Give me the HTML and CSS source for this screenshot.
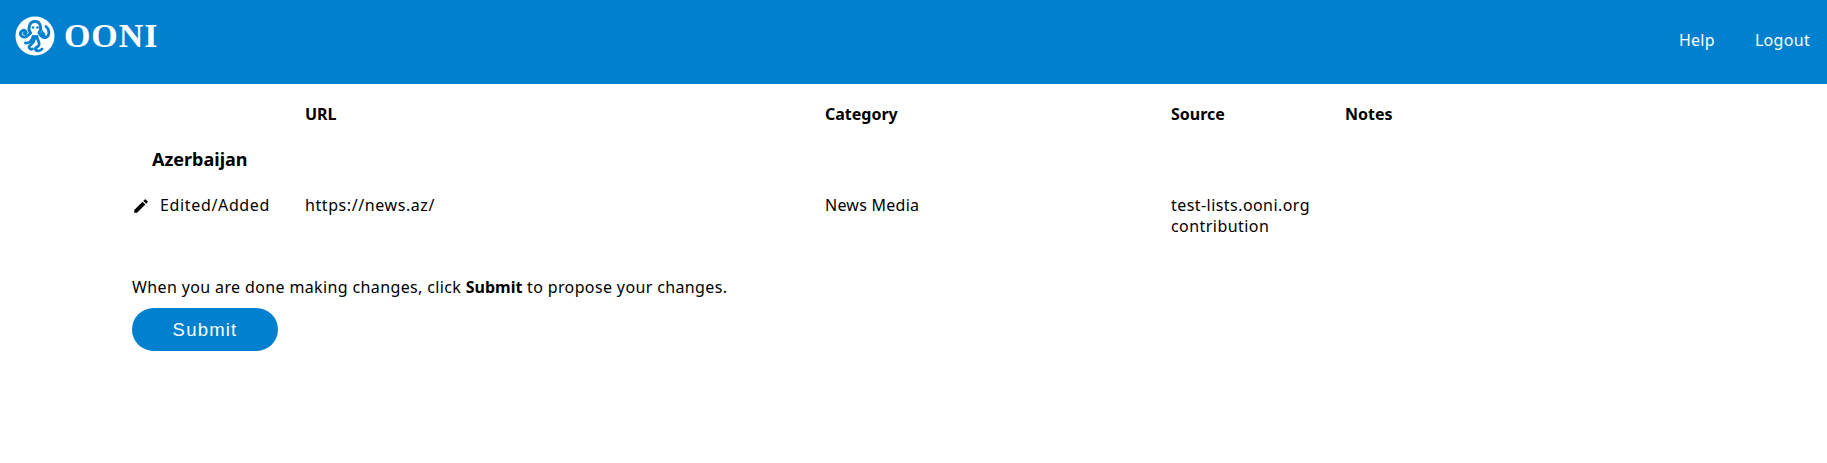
FILE: index.html
```html
<!DOCTYPE html>
<html lang="en">
<head>
<meta charset="utf-8">
<title>OONI Test Lists</title>
<link rel="stylesheet" href="styles.css">
</head>
<body>
<header class="topbar">
  <a class="brand" href="#">
    <svg class="brand-mark" viewBox="0 0 40 40" aria-hidden="true">
      <circle cx="20" cy="20" r="19.500" fill="#fff"/>
      <g fill="none" stroke="#0280d0" stroke-width="2.800" stroke-linecap="round" stroke-linejoin="round">
        <path d="M15.500 17C12.500 13.500 14 5.500 20 5.500S27 13 24 17"/>
        <path d="M15.500 17C13 20.500 8.500 23 6 19.500C4 16 8.500 12.500 11 15.500C12 17 10 18.500 9 17.500"/>
        <path d="M24 17C26 21.500 30.500 23 33 20C35 17 33.500 12.500 31 10.500"/>
        <path d="M18 20.500C17.500 24.500 14 27.500 10.500 27"/>
        <path d="M20 20.500C20 25 17.500 27.500 15 29.500C13 31 15 34 17.500 33"/>
        <path d="M22 20.500C22.500 25 25 26 24 29C23 32 19.500 31 20.500 33.500C21.500 35.500 25 35.500 27 33"/>
      </g>
      <circle cx="18" cy="11.500" r="1.300" fill="#0280d0"/>
      <circle cx="22.500" cy="11.500" r="1.300" fill="#0280d0"/>
      <path d="M27 13C28 16 30.500 17 30.500 19.200A2.400 2.400 0 0 1 25.700 19.200C25.700 17 27 15.500 27 13Z" fill="#0280d0"/>
    </svg>
    <span class="brand-name">OONI</span>
  </a>
  <nav class="topnav">
    <a href="#">Help</a>
    <a href="#">Logout</a>
  </nav>
</header>
<main class="content">
  <table class="changes">
    <colgroup>
      <col class="col-status"><col class="col-url"><col class="col-category"><col class="col-source"><col class="col-notes">
    </colgroup>
    <thead>
      <tr><th></th><th>URL</th><th>Category</th><th>Source</th><th>Notes</th></tr>
    </thead>
    <tbody>
      <tr class="country-row"><td colspan="5">Azerbaijan</td></tr>
      <tr class="entry-row">
        <td>
          <div class="status">
            <svg class="pencil" viewBox="0 0 24 24" aria-hidden="true"><path d="M3 17.250V21h3.750L17.810 9.940l-3.750-3.750L3 17.250zM20.710 7.040a1 1 0 0 0 0-1.410l-2.340-2.340a1 1 0 0 0-1.410 0l-1.830 1.830 3.750 3.750 1.830-1.830z"/></svg>
            <span>Edited/Added</span>
          </div>
        </td>
        <td class="cell-url">https://news.az/</td>
        <td class="cell-category">News Media</td>
        <td class="cell-source">test-lists.ooni.org contribution</td>
        <td></td>
      </tr>
    </tbody>
  </table>
  <p class="hint">When you are done making changes, click <strong>Submit</strong> to propose your changes.</p>
  <button class="submit" type="button">Submit</button>
</main>
</body>
</html>
```
FILE: styles.css
```css
* { box-sizing: border-box; }
html, body { margin: 0; padding: 0; background: #fff; }
body {
  font-family: "Noto Sans", "Open Sans", sans-serif;
  font-size: 16px;
  color: #000;
}
a { color: inherit; text-decoration: none; }

.topbar {
  height: 84px;
  background: #0280d0;
  color: #fff;
  display: flex;
  align-items: center;
  justify-content: space-between;
  padding: 0 17px 0 15px;
}
.brand { display: flex; align-items: center; gap: 9px; margin-top: -13px; }
.brand-mark { width: 40px; height: 40px; display: block; }
.brand-name {
  font-family: "Liberation Serif", serif;
  font-weight: 700;
  font-size: 34px;
  letter-spacing: 0.9px;
  line-height: 40px;
}
.topnav { display: flex; gap: 40px; margin-top: -5px; letter-spacing: 0.3px; }

.content { padding: 0 0 0 132px; }

.changes {
  border-collapse: collapse;
  table-layout: fixed;
  width: 1400px;
}
.col-status { width: 173px; }
.col-url { width: 520px; }
.col-category { width: 346px; }
.col-source { width: 174px; }
.changes th, .changes td {
  padding: 0;
  text-align: left;
  vertical-align: top;
  font-weight: 400;
}
.changes th { font-weight: 700; line-height: 22px; padding: 19px 0 11px; }
.country-row td { font-size: 18px; font-weight: 700; padding: 11px 0 11px 20px; line-height: 24px; }
.entry-row td { line-height: 21px; padding-top: 13px; padding-right: 24px; }
.status { display: flex; align-items: center; gap: 9px; letter-spacing: 0.65px; }
.status span { margin-left: 1px; }
.cell-url { letter-spacing: 0.58px; }
.cell-category { letter-spacing: 0.25px; }
.cell-source { letter-spacing: 0.44px; }
.pencil { width: 18px; height: 18px; display: block; fill: #000; }

.hint { margin: 39px 0 0; line-height: 22px; letter-spacing: 0.37px; }
.hint strong { letter-spacing: 0; }
.submit {
  display: block;
  margin-top: 10px;
  width: 146px;
  height: 43px;
  border: 0;
  border-radius: 22px;
  background: #0280d0;
  color: #fff;
  font-family: "Liberation Sans", Arial, sans-serif;
  font-size: 18.5px;
  letter-spacing: 1.2px;
}
```
